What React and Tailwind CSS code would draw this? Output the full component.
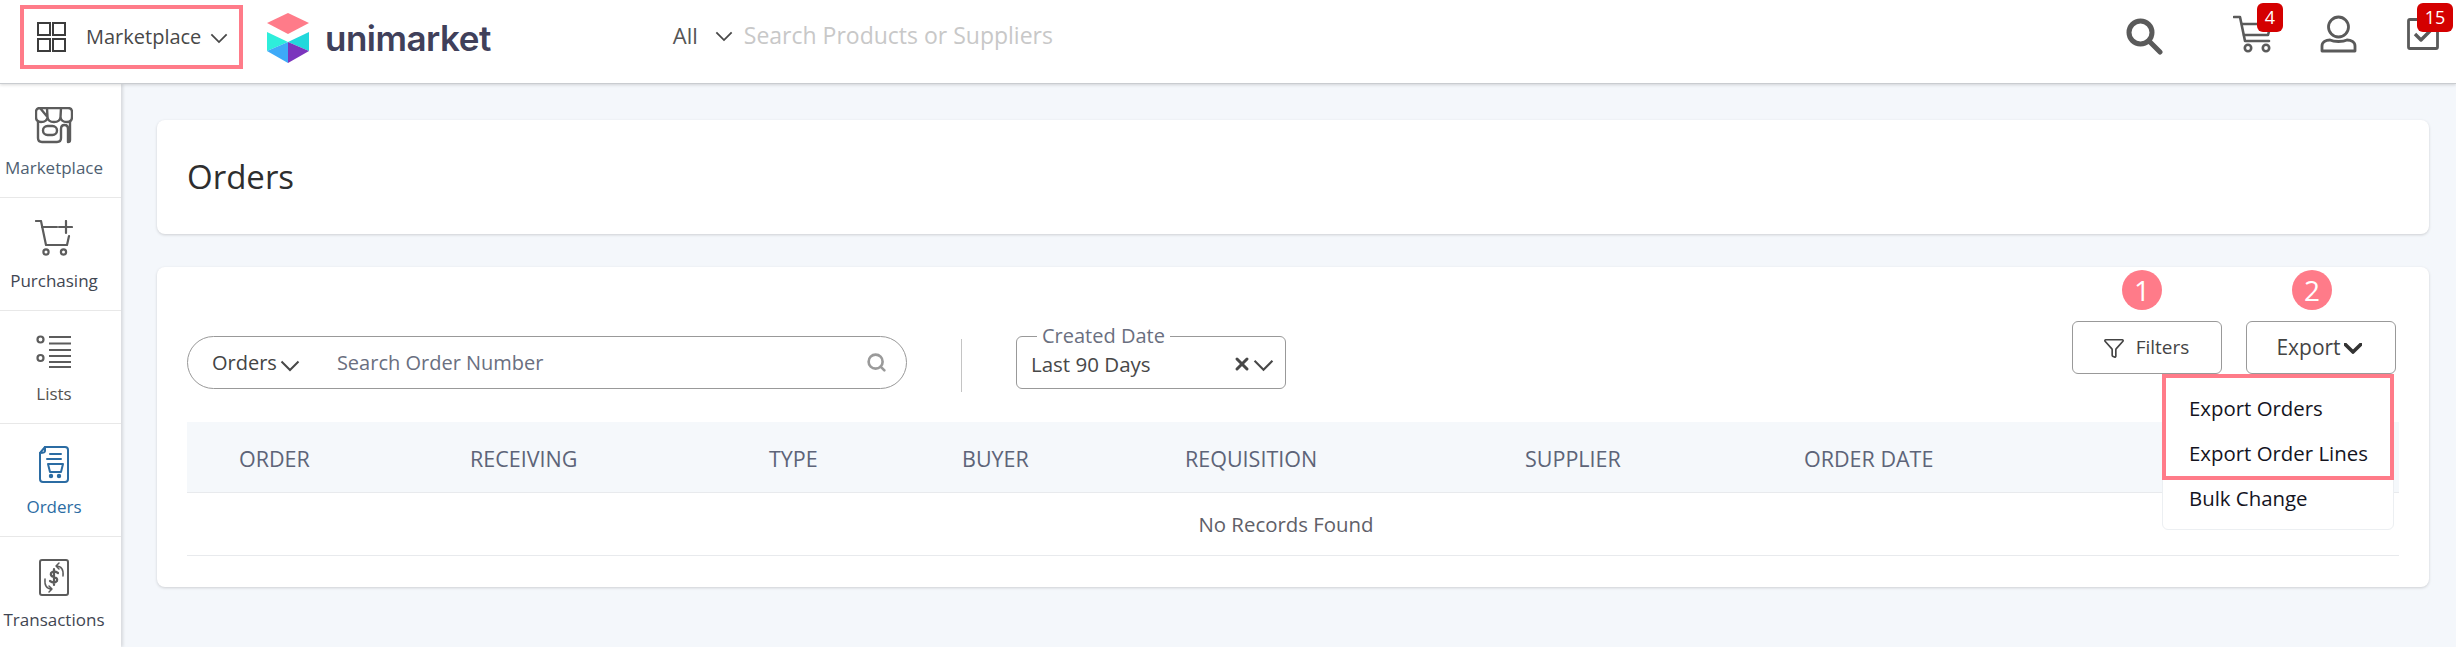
import { Search, Filter, X } from 'lucide-react'

const FONT = "font-['Open_Sans','Noto_Sans',sans-serif]"

function Chevron({ width = 18, bold = false, className = '' }) {
  return (
    <svg width={width} height={Math.round(width * 0.6)} viewBox="0 0 20 12" fill="none" stroke="currentColor" strokeWidth={bold ? 4 : 2} strokeLinecap={bold ? 'round' : 'butt'} strokeLinejoin={bold ? 'round' : 'miter'} className={`shrink-0 ${className}`}>
      <path d="M1.5 1.5 L10 10 L18.5 1.5" />
    </svg>
  )
}

// ─── Header icons ─────────────────────────────────────────────────────────────
function GridIcon() {
  return (
    <svg width="29" height="30" viewBox="0 0 29 30" fill="none" stroke="#3c3c3c" strokeWidth="2">
      <rect x="1" y="1" width="12" height="12" />
      <rect x="16" y="1" width="12" height="12" />
      <rect x="1" y="17" width="12" height="12" />
      <rect x="16" y="17" width="12" height="12" />
    </svg>
  )
}

function Logo() {
  return (
    <svg width="42" height="50" viewBox="0 0 42 50">
      <polygon points="21,0 42,10 21,21 0,10" fill="#ff7b89" />
      <polygon points="0,19 21,29 0,38" fill="#2eeedb" />
      <polygon points="42,19 21,29 42,38" fill="#22d8dc" />
      <polygon points="0,38 21,29 21,50" fill="#3eaaf8" />
      <polygon points="42,38 21,29 21,50" fill="#7b35bd" />
    </svg>
  )
}

function HeaderSearch() {
  return (
    <svg width="37" height="37" viewBox="0 0 37 37" fill="none" stroke="#5a5a5a" strokeWidth="5">
      <circle cx="14.5" cy="14.5" r="11.5" />
      <path d="M24 24 L34 34" strokeLinecap="round" />
    </svg>
  )
}

function CartIcon() {
  return (
    <svg width="40" height="38" viewBox="0 0 40 38" fill="none" stroke="#5a5a5a" strokeWidth="2.6" strokeLinecap="round" strokeLinejoin="round">
      <path d="M1 2 H7 L12 26 H36" />
      <path d="M9 9 H38 L35 20 H11" />
      <circle cx="15" cy="33" r="3.2" />
      <circle cx="33" cy="33" r="3.2" />
    </svg>
  )
}

function UserIcon() {
  return (
    <svg width="37" height="38" viewBox="0 0 37 38" fill="none" stroke="#5a5a5a" strokeWidth="2.8" strokeLinejoin="round">
      <circle cx="18.5" cy="12" r="10" />
      <path d="M2 36 V31 C2 27 6 25 10 25 C14 27 23 27 27 25 C31 25 35 27 35 31 V36 Z" />
    </svg>
  )
}

function CheckIcon() {
  return (
    <svg width="32" height="32" viewBox="0 0 32 32" fill="none" stroke="#5a5a5a" strokeWidth="2.8" strokeLinejoin="round">
      <rect x="1.5" y="1.5" width="29" height="29" rx="1.5" />
      <path d="M8 16 L14 22 L25 11" strokeWidth="3.4" />
    </svg>
  )
}

function Badge({ children, className }) {
  return (
    <span className={`absolute flex h-[29px] items-center justify-center rounded-[6px] bg-[#d40000] text-[18px] font-medium text-white ${className}`}>
      {children}
    </span>
  )
}

// ─── Sidebar icons ────────────────────────────────────────────────────────────
function MarketplaceIcon() {
  return (
    <svg width="38" height="37" viewBox="0 0 38 37" fill="none" stroke="#5c5c5c" strokeWidth="2.4" strokeLinejoin="round" strokeLinecap="round">
      <path d="M5 1 H33 Q37 1 37 5 V10 Q37 15 32 15 Q26 15 25.5 10 L26 1 M25.5 10 Q25 15 19 15 Q13 15 12.5 10 L12 1 M12.5 10 Q12 15 6 15 Q1 15 1 10 V5 Q1 1 5 1 Z" />
      <path d="M3 15 V31 Q3 35 7 35 H22 Q26 35 26 31 V22 Q26 18 29.5 18 Q33 18 33 22 V35 Q35 35 35 33 V15" />
      <rect x="8" y="19" width="14" height="9" rx="4.5" />
    </svg>
  )
}

function PurchasingIcon() {
  return (
    <svg width="38" height="36" viewBox="0 0 38 36" fill="none" stroke="#5c5c5c" strokeWidth="2.2" strokeLinecap="round" strokeLinejoin="round">
      <path d="M1 1 H6 L11 25 H32 L34 16" />
      <path d="M7 7 H22" />
      <path d="M31 1 V13 M24 7 H37" />
      <circle cx="11" cy="32" r="2.6" />
      <circle cx="28.5" cy="32" r="2.6" />
    </svg>
  )
}

function ListsIcon() {
  return (
    <svg width="36" height="33" viewBox="0 0 36 33" fill="none" stroke="#5c5c5c" strokeWidth="2.2">
      <circle cx="4.5" cy="4.5" r="3" />
      <circle cx="4.5" cy="23" r="3" />
      <path d="M13 2 H35 M13 8.5 H35 M13 15 H35 M13 21 H35 M13 27 H35 M13 32 H35" />
    </svg>
  )
}

function OrdersIcon() {
  return (
    <svg width="30" height="37" viewBox="0 0 30 37" fill="none" stroke="#2b6ca3" strokeWidth="2" strokeLinejoin="round" strokeLinecap="round">
      <path d="M6 1 H26 Q29 1 29 4 V33 Q29 36 26 36 H4 Q1 36 1 33 V7 Z" />
      <path d="M6 1 V5 Q6 7 1 7" />
      <path d="M11 8 H22 M8 13 H22" />
      <path d="M9 18 H24 L22 26 H11 Z" />
      <circle cx="12" cy="30" r="1.2" fill="#2b6ca3" />
      <circle cx="20" cy="30" r="1.2" fill="#2b6ca3" />
    </svg>
  )
}

function TransactionsIcon() {
  return (
    <svg width="30" height="37" viewBox="0 0 30 37" fill="none" stroke="#5c5c5c" strokeWidth="2" strokeLinecap="round" strokeLinejoin="round">
      <rect x="1" y="1" width="28" height="35" rx="2" />
      <path d="M17 7 Q25 7 24 17 M17 7 L20 4 M17 7 L20 10" strokeWidth="1.5" />
      <path d="M13 30 Q5 30 6 20 M13 30 L10 27 M13 30 L10 33" strokeWidth="1.5" />
      <path d="M19 14 Q15 11 12 14 Q11 17 15 18 Q19 19 18 22 Q15 25 11 22 M15 10 V26" strokeWidth="2.2" />
    </svg>
  )
}

const NAV = [
  { label: 'Marketplace', icon: MarketplaceIcon, text: 'text-[#4f5f72]' },
  { label: 'Purchasing', icon: PurchasingIcon, text: 'text-[#3f4652]' },
  { label: 'Lists', icon: ListsIcon, text: 'text-[#55534f]' },
  { label: 'Orders', icon: OrdersIcon, text: 'text-[#2b6ca3]' },
  { label: 'Transactions', icon: TransactionsIcon, text: 'text-[#3f4652]' },
]

const COLUMNS = [
  { label: 'ORDER', width: 'w-[283px]', first: true },
  { label: 'RECEIVING', width: 'w-[299px]' },
  { label: 'TYPE', width: 'w-[193px]' },
  { label: 'BUYER', width: 'w-[223px]' },
  { label: 'REQUISITION', width: 'w-[340px]' },
  { label: 'SUPPLIER', width: 'w-[279px]' },
  { label: 'ORDER DATE', width: 'w-[230px]' },
]

function Sidebar() {
  return (
    <nav className="z-10 w-[121px] shrink-0 bg-white pt-[1px] shadow-[2px_0_3px_rgba(0,0,0,0.12)]">
      {NAV.map(item => {
        const Icon = item.icon
        return (
          <div key={item.label} className="flex h-[113px] flex-col items-center border-b border-[#e8e8e8] pr-[13px] pt-[21px]">
            <div className="flex h-[38px] items-center justify-center">
              <Icon />
            </div>
            <span className={`mt-[12px] whitespace-nowrap text-[17px] leading-[24px] ${item.text}`}>{item.label}</span>
          </div>
        )
      })}
    </nav>
  )
}

function Header() {
  return (
    <header className="z-20 flex h-[84px] shrink-0 items-start border-b border-[#c9ccd0] bg-white shadow-[0_1px_3px_rgba(0,0,0,0.15)]">
      <div className="ml-[20px] mt-[5px] flex h-[64px] w-[223px] items-center border-4 border-[#ff7b89] pl-[13px]">
        <GridIcon />
        <span className="ml-[20px] text-[20px] text-[#484848]">Marketplace</span>
        <Chevron width={18} className="ml-[9px] mt-[3px] text-[#484848]" />
      </div>
      <div className="ml-[24px] mt-[13px] flex items-center">
        <Logo />
        <span className="ml-[16px] font-['Inter',sans-serif] text-[35px] font-semibold leading-[50px] tracking-[-0.5px] text-[#40405a]">unimarket</span>
      </div>
      <div className="ml-[182px] mt-[18px] flex items-center">
        <span className="text-[22px] text-[#555555]">All</span>
        <Chevron width={18} className="ml-[17px] mt-[3px] text-[#484848]" />
        <span className="ml-[11px] text-[23px] text-[#c8c8c8]">Search Products or Suppliers</span>
      </div>
      <div className="ml-auto flex items-start">
        <div className="mr-[70px] mt-[18px]"><HeaderSearch /></div>
        <div className="relative mr-[47px] mt-[15px]">
          <CartIcon />
          <Badge className="-top-[12px] left-[24px] w-[26px]">4</Badge>
        </div>
        <div className="mr-[50px] mt-[15px]"><UserIcon /></div>
        <div className="relative mr-[17px] mt-[18px]">
          <CheckIcon />
          <Badge className="-top-[15px] left-[10px] w-[36px]">15</Badge>
        </div>
      </div>
    </header>
  )
}

function StepDot({ children, className }) {
  return (
    <span className={`absolute -top-[51px] flex h-[40px] w-[40px] items-center justify-center rounded-full bg-[#ff7b89] text-[28px] text-white ${className}`}>
      {children}
    </span>
  )
}

function Toolbar() {
  return (
    <div className="flex h-[155px] items-start">
      <div className="mt-[69px] flex h-[53px] w-[720px] items-center rounded-full border border-[#999999] pl-[24px] pr-[19px]">
        <span className="text-[20px] text-[#444444]">Orders</span>
        <Chevron width={20} className="ml-[3px] mt-[6px] text-[#484848]" />
        <span className="ml-[37px] text-[20px] text-[#6a6f80]">Search Order Number</span>
        <Search size={21} strokeWidth={3} className="ml-auto text-[#9a9a9a]" />
      </div>
      <div className="ml-[54px] mt-[72px] h-[53px] w-px bg-[#c4c4c4]" />
      <div className="relative ml-[54px] mt-[69px] flex h-[53px] w-[270px] items-center rounded-[6px] border border-[#999999] pl-[14px] pr-[11px] pt-[3px]">
        <span className="absolute -top-[13px] left-[20px] bg-white px-[5px] text-[20px] leading-[24px] text-[#6a6f80]">Created Date</span>
        <span className="text-[20.5px] text-[#484848]">Last 90 Days</span>
        <X size={20} strokeWidth={3.6} className="ml-auto text-[#484848]" />
        <Chevron width={21} className="ml-[1px] mt-[3px] text-[#484848]" />
      </div>
      <div className="ml-auto mr-[3px] mt-[54px] flex gap-[24px]">
        <div className="relative">
          <button className="flex h-[53px] w-[150px] items-center justify-center rounded-[6px] border border-[#999999] pr-[2px] text-[19px] text-[#444444]">
            <Filter size={22} strokeWidth={1.8} className="mr-[11px] text-[#444444]" />
            Filters
          </button>
          <StepDot className="left-[50px]">1</StepDot>
        </div>
        <div className="relative">
          <button className="flex h-[53px] w-[150px] items-center justify-center rounded-[6px] border border-[#999999] pr-[4px] text-[21px] text-[#444444]">
            Export
            <Chevron width={18} bold className="ml-[3px] mt-[2px] text-[#333333]" />
          </button>
          <StepDot className="left-[46px]">2</StepDot>
          <ExportMenu />
        </div>
      </div>
    </div>
  )
}

function ExportMenu() {
  return (
    <div className="absolute -left-[84px] top-full z-10 h-[156px] w-[232px] rounded-[6px] border border-[#eceff2] bg-white pl-[26px] pt-[11px] text-[20.4px] leading-[45px] text-[#14141e]">
      <div>Export Orders</div>
      <div>Export Order Lines</div>
      <div>Bulk Change</div>
      <div className="absolute -left-px -top-px h-[106px] w-[232px] border-4 border-[#ff7b89]" />
    </div>
  )
}

function OrdersTable() {
  return (
    <div>
      <div className="flex h-[71px] items-center border-b border-[#e8eaed] bg-[#f5f8fb] pt-[5px]">
        {COLUMNS.map(col => (
          <div key={col.label} className={`${col.width} whitespace-nowrap text-[21.5px] text-[#5d6478] ${col.first ? 'pl-[52px]' : ''}`}>
            {col.label}
          </div>
        ))}
      </div>
      <div className="flex h-[63px] items-center justify-center border-b border-[#e8eaed] pr-[14px] text-[20.4px] text-[#5f6068]">
        No Records Found
      </div>
    </div>
  )
}

export default function App() {
  return (
    <div className={`flex h-screen flex-col overflow-hidden bg-[#f4f7fb] ${FONT}`}>
      <Header />
      <div className="flex min-h-0 flex-1">
        <Sidebar />
        <main className="flex flex-1 flex-col gap-[33px] pl-[36px] pr-[27px] pt-[36px]">
          <section className="flex h-[114px] items-center rounded-[8px] bg-white pl-[30px] shadow-[0_1px_3px_rgba(0,0,0,0.16)]">
            <h1 className="text-[33px] text-[#2e2e2e]">Orders</h1>
          </section>
          <section className="h-[320px] rounded-[8px] bg-white px-[30px] shadow-[0_1px_3px_rgba(0,0,0,0.16)]">
            <Toolbar />
            <OrdersTable />
          </section>
        </main>
      </div>
    </div>
  )
}
